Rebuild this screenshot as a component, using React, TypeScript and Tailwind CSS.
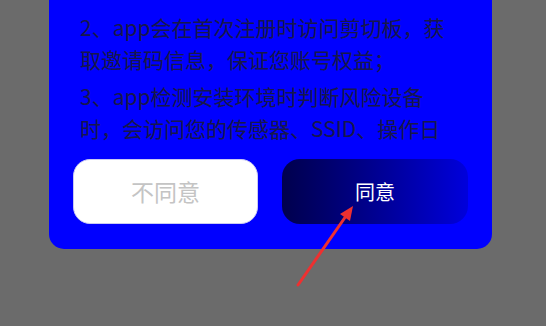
export default function App() {
  return (
    <div className="relative h-[326px] w-[546px] overflow-hidden bg-[#6b6b6b] font-['Noto_Sans_CJK_SC',sans-serif]">
      <div className="ml-[49px] flex w-[443px] flex-col rounded-b-[15px] bg-[#0000ff] pb-[25px]">
        {/* scrolled agreement text */}
        <div className="h-[144px] overflow-hidden pl-[31px] pr-[42px] pt-[11px] text-[21px] leading-[32px] text-[#18184a]">
          <p>2、app会在首次注册时访问剪切板，获取邀请码信息，保证您账号权益；</p>
          <p className="mt-[5px]">3、app检测安装环境时判断风险设备时，会访问您的传感器、SSID、操作日</p>
        </div>
        <div className="mt-[15px] flex gap-[24px] px-[24px]">
          <button className="flex h-[65px] w-[185px] items-center justify-center rounded-[17px] border-[1.5px] border-[#c9c9f2] bg-white text-[23px] text-[#c4c4c4]">
            不同意
          </button>
          <button className="flex h-[65px] w-[186px] items-center justify-center rounded-[18px] bg-linear-to-r from-[#00004d] to-[#0000dc] text-[20px] text-white">
            同意
          </button>
        </div>
      </div>
      <svg className="absolute left-0 top-0" width="546" height="326" viewBox="0 0 546 326">
        <line x1="298" y1="285" x2="346" y2="216" stroke="#ee3030" strokeWidth="3" strokeLinecap="round" />
        <polygon points="353,206 340,214 350,221" fill="#ee3030" />
      </svg>
    </div>
  )
}
